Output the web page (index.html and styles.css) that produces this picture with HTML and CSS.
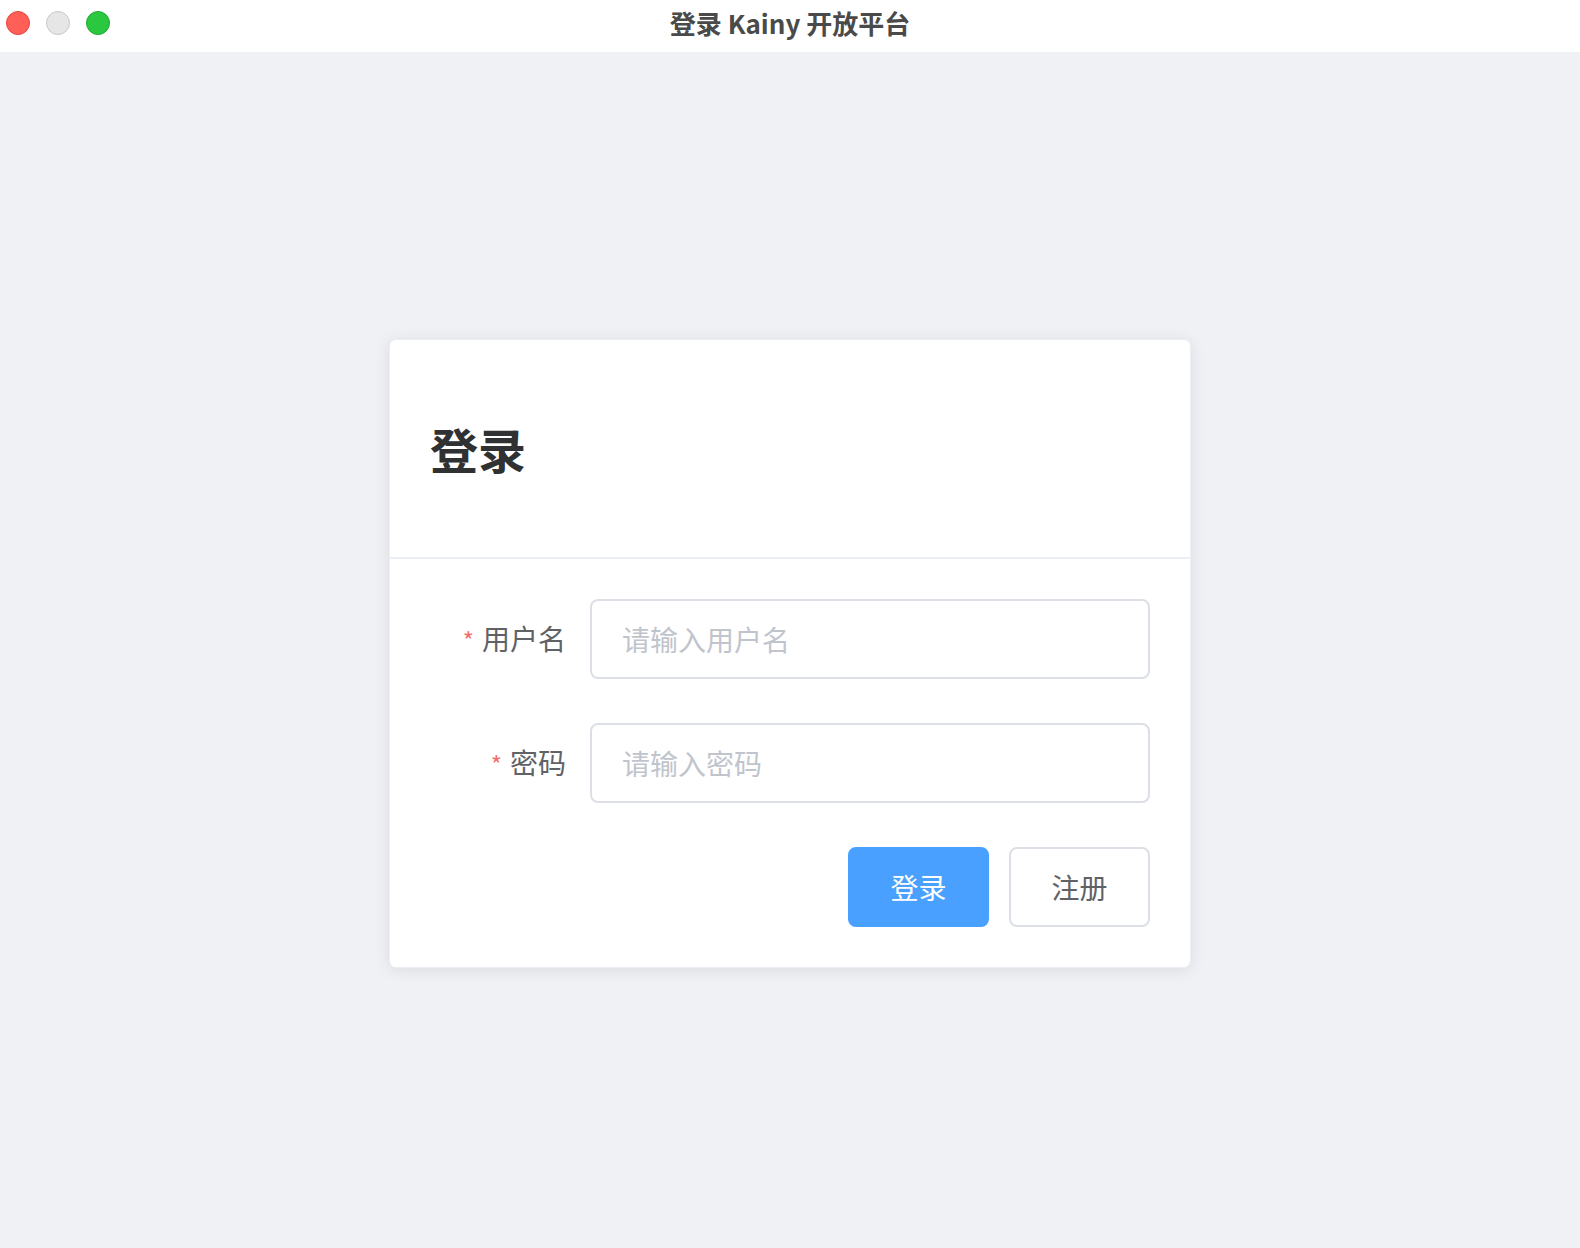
FILE: index.html
```html
<!DOCTYPE html>
<html lang="zh-CN">
<head>
<meta charset="utf-8">
<title>登录 Kainy 开放平台</title>
<link rel="stylesheet" href="styles.css">
</head>
<body>
<div class="window">
  <header class="titlebar">
    <div class="lights">
      <span class="light light-close"></span>
      <span class="light light-min"></span>
      <span class="light light-max"></span>
    </div>
    <div class="window-title">登录 Kainy 开放平台</div>
  </header>
  <main class="main">
    <section class="card">
      <div class="card-header">
        <h2 class="card-title">登录</h2>
      </div>
      <div class="card-body">
        <form class="form">
          <div class="form-item">
            <label class="form-label"><span class="req">*</span>用户名</label>
            <div class="form-control">
              <input class="input" type="text" placeholder="请输入用户名">
            </div>
          </div>
          <div class="form-item">
            <label class="form-label"><span class="req">*</span>密码</label>
            <div class="form-control">
              <input class="input" type="password" placeholder="请输入密码">
            </div>
          </div>
          <div class="form-item form-actions">
            <button type="button" class="btn btn-primary">登录</button>
            <button type="button" class="btn btn-default">注册</button>
          </div>
        </form>
      </div>
    </section>
  </main>
</div>
</body>
</html>
```
FILE: styles.css
```css
* { box-sizing: border-box; }
html, body {
  margin: 0;
  padding: 0;
  width: 100%;
  height: 100%;
}
body {
  font-family: "Noto Sans CJK SC", "Noto Sans", "Liberation Sans", sans-serif;
  background: #f0f1f5;
}
.window {
  display: flex;
  flex-direction: column;
  height: 100%;
}
.titlebar {
  position: relative;
  height: 52px;
  background: #ffffff;
  display: flex;
  align-items: center;
  justify-content: center;
  padding-bottom: 6px;
  flex: none;
}
.lights {
  position: absolute;
  left: 6px;
  top: 11px;
  display: flex;
  gap: 16px;
}
.light {
  width: 24px;
  height: 24px;
  border-radius: 50%;
  display: block;
}
.light-close { background: #ff5f57; border: 1px solid #e2463f; }
.light-min { background: #e6e6e6; border: 1px solid #c9c9c9; }
.light-max { background: #2ac840; border: 1px solid #1fa733; }
.window-title {
  font-size: 26px;
  font-weight: 700;
  color: #4a4a4a;
  line-height: 30px;
}
.main {
  flex: 1;
  display: flex;
  align-items: center;
  justify-content: center;
  padding-top: 6px;
}
.card {
  width: 802px;
  background: #ffffff;
  border: 1px solid #ebeef5;
  border-radius: 7px;
  box-shadow: 0 2px 16px rgba(0, 0, 0, 0.09);
  overflow: hidden;
}
.card-header {
  height: 219px;
  border-bottom: 2px solid #ebeef5;
  display: flex;
  align-items: center;
  padding: 0 40px;
}
.card-title {
  margin: 0;
  font-size: 48px;
  font-weight: 700;
  color: #303133;
  line-height: 1;
}
.card-body {
  padding: 40px 40px 40px;
}
.form {
  display: flex;
  flex-direction: column;
  gap: 44px;
}
.form-item {
  display: flex;
  align-items: center;
  height: 80px;
}
.form-label {
  width: 160px;
  flex: none;
  text-align: right;
  padding-right: 24px;
  font-size: 28px;
  color: #606266;
  line-height: 80px;
}
.req {
  color: #f56c6c;
  margin-right: 8px;
  font-size: 24px;
}
.form-control {
  flex: 1;
}
.input {
  width: 100%;
  height: 80px;
  border: 2px solid #dcdfe6;
  border-radius: 8px;
  padding: 0 30px;
  font-family: inherit;
  font-size: 28px;
  color: #606266;
  outline: none;
  background: #ffffff;
}
.input::placeholder {
  color: #c0c4cc;
}
.form-actions {
  justify-content: flex-end;
  gap: 20px;
}
.btn {
  height: 80px;
  width: 141px;
  border-radius: 8px;
  font-family: inherit;
  font-size: 28px;
  line-height: 1;
  cursor: pointer;
  padding: 0;
}
.btn-primary {
  background: #49a0ff;
  border: 2px solid #49a0ff;
  color: #ffffff;
}
.btn-default {
  background: #ffffff;
  border: 2px solid #dcdfe6;
  color: #606266;
}
```
